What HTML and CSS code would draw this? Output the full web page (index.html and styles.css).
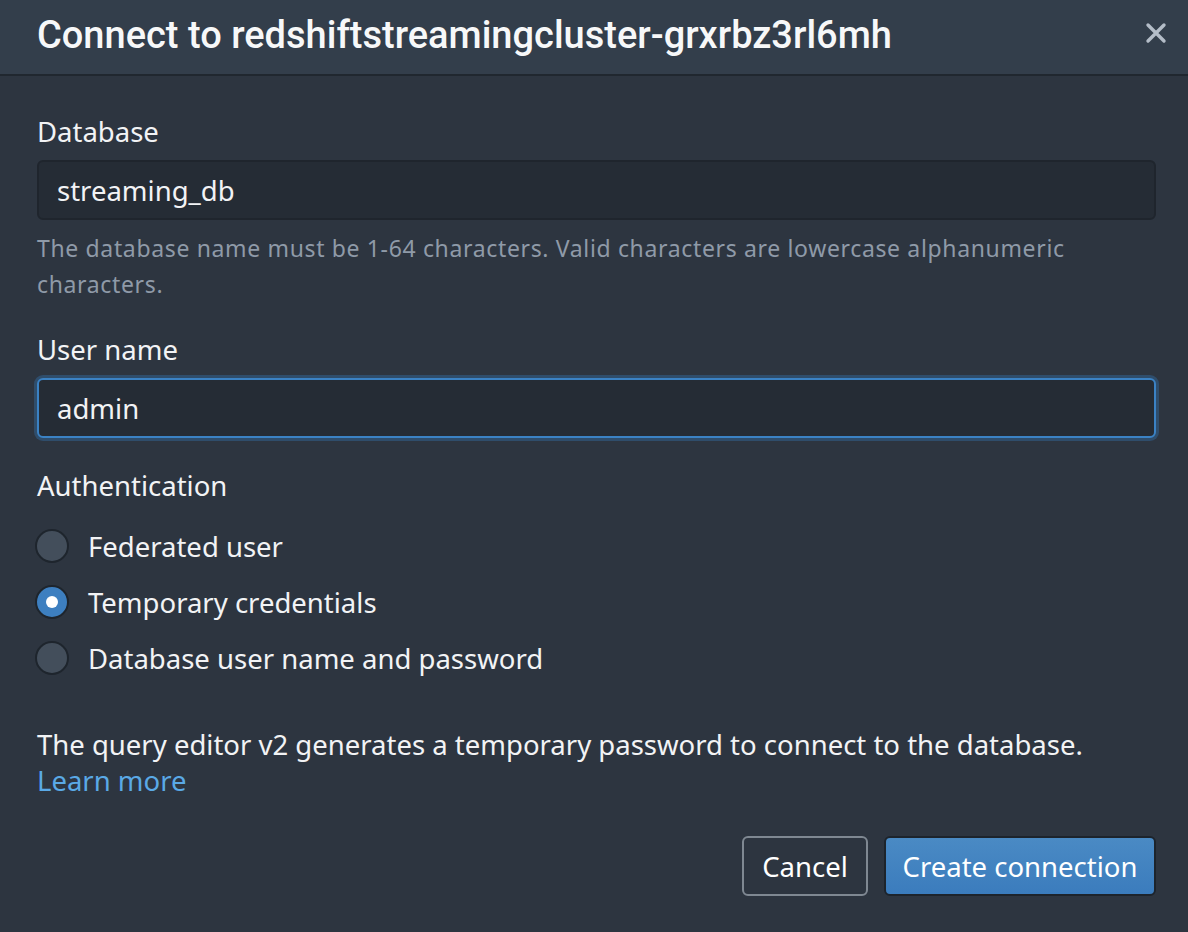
FILE: index.html
```html
<!DOCTYPE html>
<html lang="en">
<head>
<meta charset="utf-8">
<title>Connect</title>
<link rel="stylesheet" href="styles.css">
</head>
<body>
<div class="modal">
  <header class="modal-header">
    <h1 class="title">Connect to redshiftstreamingcluster-grxrbz3rl6mh</h1>
    <button class="close" aria-label="Close">
      <svg width="22" height="22" viewBox="0 0 22 22"><path d="M3 3 L19 19 M19 3 L3 19" stroke="#b4bdc8" stroke-width="3.4" stroke-linecap="round"/></svg>
    </button>
  </header>
  <main class="modal-body">
    <div class="field">
      <label class="label">Database</label>
      <div class="input">streaming_db</div>
      <p class="help">The database name must be 1-64 characters. Valid characters are lowercase alphanumeric characters.</p>
    </div>
    <div class="field">
      <label class="label">User name</label>
      <div class="input focused">admin</div>
    </div>
    <div class="field">
      <label class="label">Authentication</label>
      <div class="radios">
        <div class="radio-row"><span class="radio"></span><span>Federated user</span></div>
        <div class="radio-row"><span class="radio checked"></span><span>Temporary credentials</span></div>
        <div class="radio-row"><span class="radio"></span><span>Database user name and password</span></div>
      </div>
    </div>
    <p class="info">The query editor v2 generates a temporary password to connect to the database.<br><a class="link" href="#">Learn more</a></p>
    <div class="actions">
      <button class="btn btn-cancel">Cancel</button>
      <button class="btn btn-primary">Create connection</button>
    </div>
  </main>
</div>
</body>
</html>
```
FILE: styles.css
```css
* { box-sizing: border-box; }
html, body { margin: 0; padding: 0; }
body {
  background: #2d3540;
  font-family: "Noto Sans", "Open Sans", sans-serif;
  color: #eef0f2;
  width: 1188px;
  height: 932px;
  overflow: hidden;
}
.modal { width: 1188px; }
.modal-header {
  height: 76px;
  background: #333e4b;
  border-bottom: 2px solid #20272f;
  display: flex;
  align-items: center;
  justify-content: space-between;
  padding: 0 21px 0 37px;
}
.title {
  margin: 0;
  font-family: Roboto, sans-serif;
  font-weight: 500;
  font-size: 38px;
  color: #f7f8f9;
  letter-spacing: 0;
  position: relative;
  top: -2px;
}
.close {
  background: none;
  border: 0;
  padding: 0;
  width: 22px;
  height: 22px;
  display: flex;
  position: relative;
  top: -4px;
}
.modal-body {
  padding: 38px 32px 0 37px;
}
.field { margin-bottom: 30px; }
.label {
  display: block;
  font-size: 27.5px;
  line-height: 36px;
  color: #f2f3f5;
  margin-bottom: 10px;
}
.input {
  height: 60px;
  background: #252c35;
  border: 2px solid #1f252d;
  border-radius: 6px;
  padding: 0 18px;
  display: flex;
  align-items: center;
  font-size: 27.5px;
  color: #f2f3f5;
}
.input.focused {
  border-color: #3b82c4;
  box-shadow: 0 0 0 3px #2f4d6b;
}
.help {
  margin: 10px 0 0;
  font-size: 23px;
  line-height: 36px;
  color: #8f9aa8;
  letter-spacing: 0.65px;
}
.radios { display: flex; flex-direction: column; margin-top: 14px; }
.radio-row {
  height: 56px;
  display: flex;
  align-items: center;
  gap: 19px;
  font-size: 27.5px;
  color: #f2f3f5;
  margin-left: -2px;
}
.radio {
  width: 34px;
  height: 34px;
  border-radius: 50%;
  background: #434e5b;
  border: 2px solid #1e252d;
  display: flex;
  align-items: center;
  justify-content: center;
  flex: none;
}
.radio.checked { background: #3d7fc0; }
.radio.checked::after {
  content: "";
  width: 12px;
  height: 12px;
  border-radius: 50%;
  background: #ffffff;
}
.info {
  margin: 41px 0 0;
  font-size: 27.5px;
  line-height: 36px;
  color: #f2f3f5;
}
.link { color: #5aa9e6; text-decoration: none; }
.actions {
  display: flex;
  justify-content: flex-end;
  gap: 16px;
  margin-top: 37px;
}
.btn {
  height: 60px;
  border-radius: 6px;
  font-family: "Noto Sans", "Open Sans", sans-serif;
  font-size: 27.5px;
  padding: 0;
  color: #ffffff;
}
.btn-cancel {
  background: transparent;
  border: 2px solid #7f8892;
  width: 126px;
}
.btn-primary {
  background: linear-gradient(#4a8ac4, #3b7cbd);
  border: 2px solid #1d242c;
  width: 272px;
}
```
